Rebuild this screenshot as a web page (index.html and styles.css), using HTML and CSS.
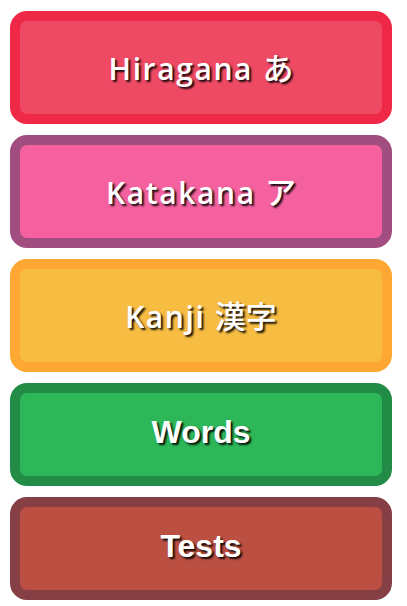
FILE: index.html
```html
<!DOCTYPE html>
<html lang="ja">
<head>
<meta charset="utf-8">
<title>Menu</title>
<link rel="stylesheet" href="styles.css">
</head>
<body>
<nav class="menu">
  <a class="btn btn-hiragana btn-tall"><span class="label round">Hiragana <span class="cjk">あ</span></span></a>
  <a class="btn btn-katakana btn-tall"><span class="label round">Katakana <span class="cjk">ア</span></span></a>
  <a class="btn btn-kanji btn-tall"><span class="label round">Kanji <span class="cjk">漢字</span></span></a>
  <a class="btn btn-words btn-short"><span class="label plain">Words</span></a>
  <a class="btn btn-tests btn-short"><span class="label plain">Tests</span></a>
</nav>
</body>
</html>
```
FILE: styles.css
```css
html, body {
  margin: 0;
  padding: 0;
  background: #ffffff;
}
.menu {
  display: flex;
  flex-direction: column;
  gap: 11px;
  padding: 11px 15px 0 10px;
}
.btn {
  display: flex;
  align-items: center;
  justify-content: center;
  box-sizing: border-box;
  border: 10px solid;
  border-radius: 17px;
  color: #ffffff;
  text-decoration: none;
}
.btn-tall { height: 113px; }
.btn-short { height: 103px; }
.label {
  text-shadow: 2px 2px 2px rgba(0, 0, 0, 0.9);
  white-space: nowrap;
}
.round {
  font-family: "Open Sans", "Noto Sans CJK JP", sans-serif;
  font-size: 30px;
  font-weight: 600;
  letter-spacing: 1.6px;
  line-height: 1.2;
}
.cjk {
  font-family: "Noto Sans CJK JP", sans-serif;
  font-weight: 500;
  font-size: 31px;
  letter-spacing: 0;
}
.plain {
  font-family: "Liberation Sans", Arial, sans-serif;
  font-size: 32px;
  font-weight: bold;
  margin-top: -4px;
}
.btn-hiragana { border-color: #f02848; background: #ef4a64; }
.btn-katakana { border-color: #a14d80; background: #f4619e; }
.btn-kanji { border-color: #fea732; background: #f7bc42; }
.btn-words { border-color: #228b45; background: #2db758; }
.btn-tests { border-color: #863f45; background: #bb4f42; }
```
